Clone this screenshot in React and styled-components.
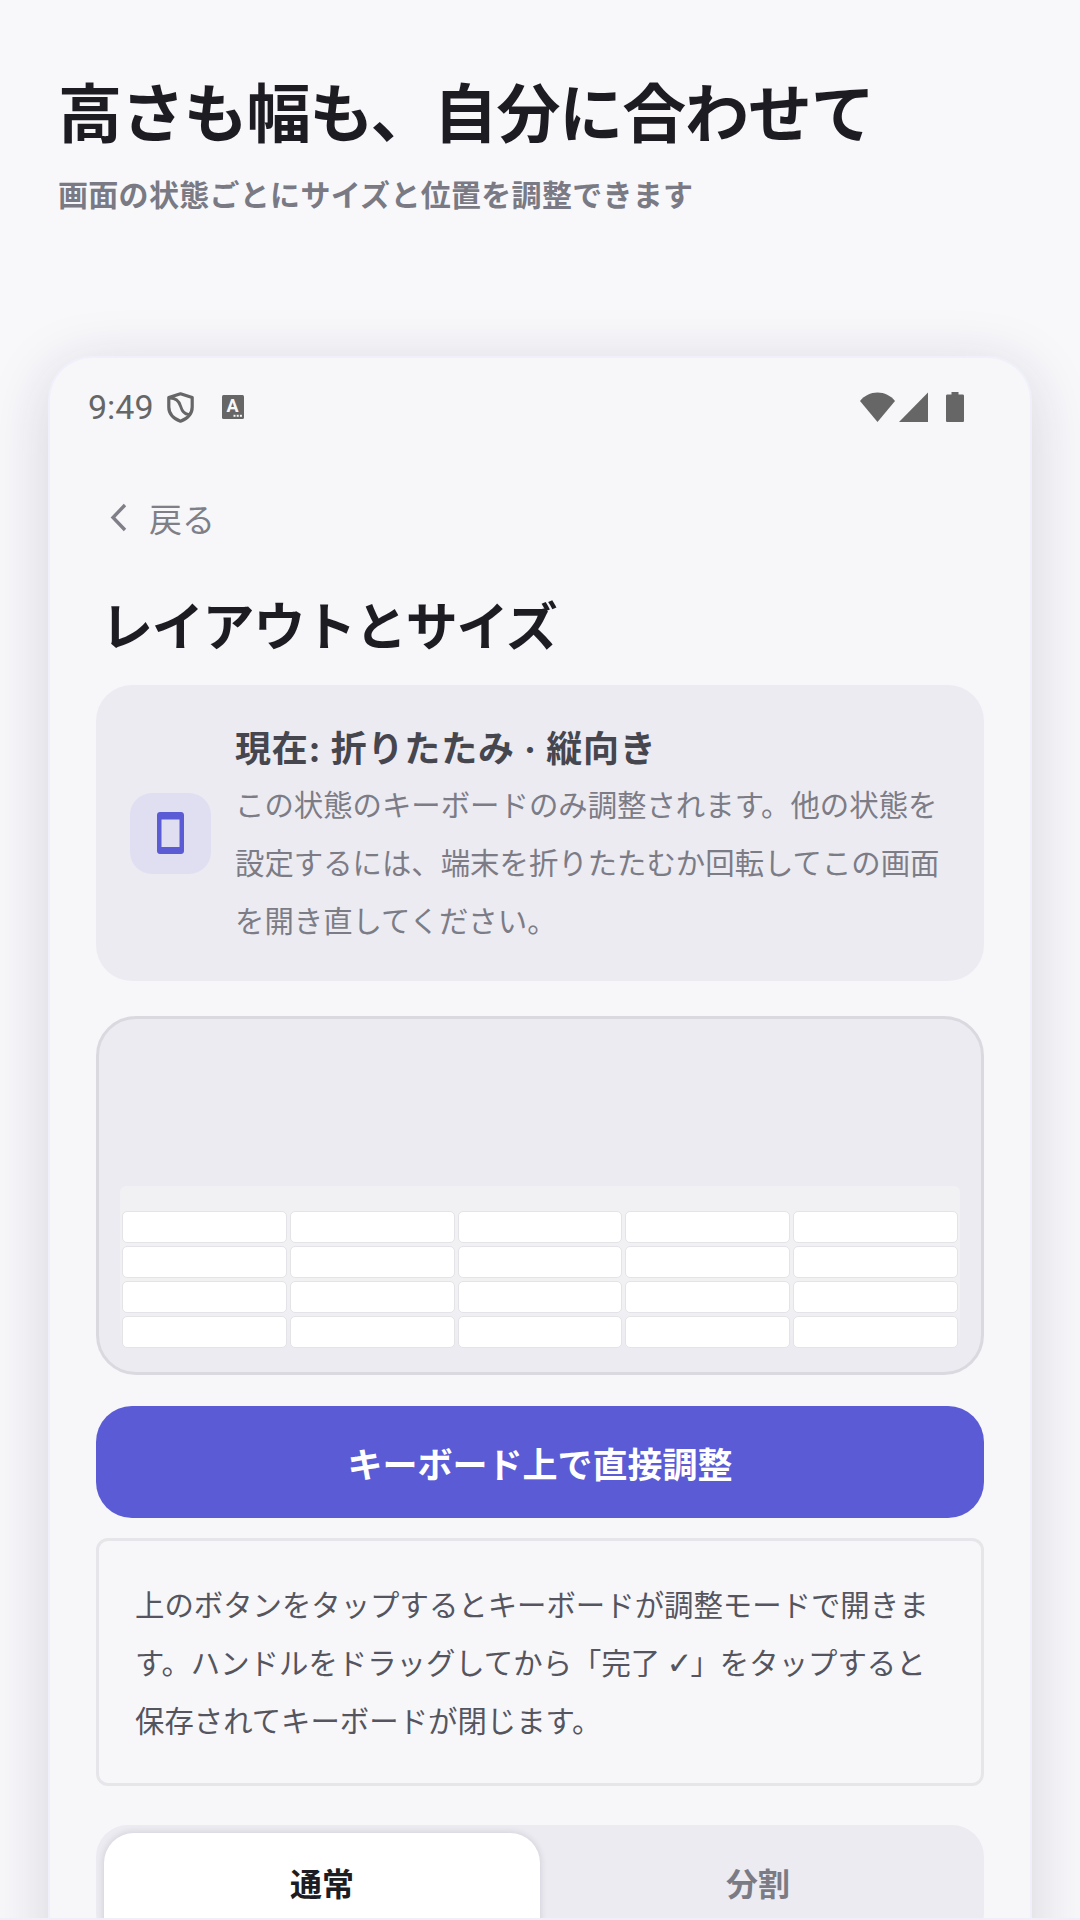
import React from 'react';
import styled, { createGlobalStyle } from 'styled-components';

const GlobalStyle = createGlobalStyle`
    html, body {
        margin: 0;
        padding: 0;
        background: #f8f8fb;
    }
    * {
        box-sizing: border-box;
    }
`;

const Page = styled.div`
    position: relative;
    width: 1080px;
    height: 1920px;
    overflow: hidden;
    background: #f8f8fb;
    font-family: Inter, "Noto Sans CJK JP", sans-serif;
    padding: 0 48px;
    &::after {
        content: '';
        position: absolute;
        left: 0;
        right: 0;
        bottom: 0;
        height: 2px;
        background: #efeffa;
    }
`;
const Header = styled.header`
    padding: 72px 10px 0;
    height: 356px;
`;
const Headline = styled.h1`
    margin: 0;
    font-size: 64px;
    line-height: 84px;
    font-weight: 700;
    color: #1c1c22;
    letter-spacing: -1.1px;
`;
const Subhead = styled.p`
    margin: 19px 0 0;
    font-size: 30px;
    line-height: 40px;
    font-weight: 700;
    color: #7a7a85;
    letter-spacing: 0.3px;
`;
const Phone = styled.section`
    width: 984px;
    height: 1700px;
    border-radius: 44px 44px 0 0;
    background: #f7f7fa;
    border: solid #f0f0fb;
    border-width: 2px 2px 0;
    box-shadow: 0 12px 60px rgba(30, 30, 60, 0.17);
    padding: 0 46px;
`;
const StatusBar = styled.div`
    height: 98px;
    margin: 0 -8px;
    display: flex;
    align-items: center;
    color: #666;
`;
const Time = styled.span`
    font-family: Roboto, sans-serif;
    font-size: 34px;
    margin-right: 13px;
`;
const StatusRight = styled.div`
    margin-left: auto;
    margin-right: 28px;
    display: flex;
    align-items: center;
    gap: 4px;
`;
const BackRow = styled.div`
    display: flex;
    align-items: center;
    gap: 21px;
    height: 48px;
    margin: 38px 0 0 10px;
    color: #7f7f88;
    font-size: 33px;
`;
const Title = styled.h2`
    margin: 50px 0 0 5px;
    font-size: 52px;
    line-height: 72px;
    font-weight: 700;
    color: #1c1c22;
    letter-spacing: -1.2px;
`;
const InfoCard = styled.div`
    margin-top: 21px;
    height: 296px;
    border-radius: 36px;
    background: #ecebf1;
    display: flex;
    align-items: center;
    padding: 0 34px;
    gap: 24px;
`;
const IconTile = styled.div`
    flex: none;
    width: 81px;
    height: 81px;
    border-radius: 22px;
    background: #e0dff2;
    display: flex;
    align-items: center;
    justify-content: center;
`;
const InfoText = styled.div`
    flex: 1;
    margin-top: 6px;
`;
const InfoTitle = styled.div`
    font-size: 36px;
    line-height: 56px;
    font-weight: 700;
    color: #46464f;
    letter-spacing: 0.8px;
`;
const InfoBody = styled.div`
    font-size: 29.4px;
    line-height: 58px;
    color: #7c7c86;
`;
const Preview = styled.div`
    margin-top: 35px;
    height: 359px;
    border-radius: 40px;
    border: 3px solid #d9d9df;
    background: #ecebf1;
    display: flex;
    flex-direction: column;
    justify-content: flex-end;
    padding: 0 21px 21px;
`;
const Keyboard = styled.div`
    height: 165px;
    background: linear-gradient(#f1f1f4, #f1f1f4 70%, #ecebf1);
    border-radius: 6px 6px 0 0;
    padding: 25px 2px 0;
    display: grid;
    grid-template-columns: repeat(5, 1fr);
    grid-auto-rows: 32px;
    gap: 3px;
`;
const Key = styled.div`
    background: #fff;
    border: 1.5px solid #e4e4e8;
    border-radius: 5px;
`;
const PrimaryButton = styled.button`
    display: block;
    width: 100%;
    margin-top: 31px;
    height: 112px;
    border: none;
    border-radius: 36px;
    background: #5a5bd5;
    color: #fff;
    font-family: inherit;
    font-size: 35px;
    font-weight: 700;
`;
const Note = styled.div`
    margin-top: 20px;
    height: 248px;
    border: 3px solid #e6e6ea;
    border-radius: 12px;
    padding: 36px 36px 0;
    font-size: 29.4px;
    line-height: 58px;
    color: #55555f;
`;
const CheckMark = styled.span`
    font-family: "DejaVu Sans", sans-serif;
    font-size: 31px;
    line-height: 0;
    margin: 0 -2px;
`;
const Tabs = styled.div`
    margin-top: 39px;
    height: 120px;
    border-radius: 32px;
    background: #ecebf1;
    padding: 8px 8px 0;
    display: flex;
`;
const Tab = styled.div`
    flex: 1;
    border-radius: 30px 30px 0 0;
    background: ${p => (p.$active ? '#fff' : 'transparent')};
    box-shadow: ${p => (p.$active ? '0 0 7px rgba(40, 40, 70, 0.16)' : 'none')};
    color: ${p => (p.$active ? '#1c1c22' : '#7b7b85')};
    font-size: 32px;
    font-weight: 700;
    text-align: center;
    padding-top: 30px;
    line-height: 44px;
`;

const ShieldIcon = () => (
    <svg width="27" height="31" viewBox="0 0 27 31" fill="none" stroke="#666" strokeWidth="3.2" strokeLinejoin="round">
        <path d="M13.5 1.8 L25.2 5.6 V15 C25.2 21.8 20.5 26.6 13.5 29.2 C6.5 26.6 1.8 21.8 1.8 15 V5.6 Z" />
        <path d="M3 6 C9 6 12 9 13.5 14 C15 19 18 23.5 23.5 22" strokeWidth="2.8" />
    </svg>
);

const KeyboardBadge = () => (
    <svg width="22" height="24" viewBox="0 0 22 24" style={{ marginLeft: 28 }}>
        <rect width="22" height="24" rx="1.5" fill="#666" />
        <text x="10.5" y="17" textAnchor="middle" fontFamily="Roboto, sans-serif" fontWeight="700" fontSize="18" fill="#f7f7fa">A</text>
        <rect x="11.5" y="19.8" width="2" height="2" fill="#f7f7fa" />
        <rect x="14.7" y="19.8" width="2" height="2" fill="#f7f7fa" />
        <rect x="17.9" y="19.8" width="2" height="2" fill="#f7f7fa" />
    </svg>
);

const WifiIcon = () => (
    <svg width="35" height="30" viewBox="0 0 35 30">
        <path d="M17.5 30 L0 9 C4.5 3.5 10.5 0.5 17.5 0.5 C24.5 0.5 30.5 3.5 35 9 Z" fill="#666" />
    </svg>
);

const SignalIcon = () => (
    <svg width="29" height="30" viewBox="0 0 29 30">
        <path d="M0 30 L29 0.5 V30 Z" fill="#666" />
    </svg>
);

const BatteryIcon = () => (
    <svg width="18" height="30" viewBox="0 0 18 30" style={{ marginLeft: 14 }}>
        <path d="M5.5 0 H12.5 V2.5 H16.5 C17.5 2.5 18 3 18 4 V28.5 C18 29.5 17.5 30 16.5 30 H1.5 C0.5 30 0 29.5 0 28.5 V4 C0 3 0.5 2.5 1.5 2.5 H5.5 Z" fill="#666" />
    </svg>
);

const BackChevron = () => (
    <svg width="22" height="32" viewBox="0 0 22 32" fill="none" stroke="#7f7f88" strokeWidth="3.4">
        <path d="M19 3 L7 15.5 L19 28" />
    </svg>
);

const TabletIcon = () => (
    <svg width="27" height="42" viewBox="0 0 27 42">
        <path fillRule="evenodd" fill="#5a5bd5" d="M3 0 H24 C25.7 0 27 1.3 27 3 V39 C27 40.7 25.7 42 24 42 H3 C1.3 42 0 40.7 0 39 V3 C0 1.3 1.3 0 3 0 Z M4.5 7.5 V35 H22.5 V7.5 Z" />
    </svg>
);

const App = () => {
    return (
        <Page>
            <GlobalStyle />
            <Header>
                <Headline>高さも幅も、自分に合わせて</Headline>
                <Subhead>画面の状態ごとにサイズと位置を調整できます</Subhead>
            </Header>
            <Phone>
                <StatusBar>
                    <Time>9:49</Time>
                    <ShieldIcon />
                    <KeyboardBadge />
                    <StatusRight>
                        <WifiIcon />
                        <SignalIcon />
                        <BatteryIcon />
                    </StatusRight>
                </StatusBar>
                <BackRow>
                    <BackChevron />
                    <span>戻る</span>
                </BackRow>
                <Title>レイアウトとサイズ</Title>
                <InfoCard>
                    <IconTile>
                        <TabletIcon />
                    </IconTile>
                    <InfoText>
                        <InfoTitle>現在: 折りたたみ · 縦向き</InfoTitle>
                        <InfoBody>この状態のキーボードのみ調整されます。他の状態を設定するには、端末を折りたたむか回転してこの画面を開き直してください。</InfoBody>
                    </InfoText>
                </InfoCard>
                <Preview>
                    <Keyboard>
                        {Array.from({ length: 20 }, (_, i) => <Key key={i} />)}
                    </Keyboard>
                </Preview>
                <PrimaryButton>キーボード上で直接調整</PrimaryButton>
                <Note>上のボタンをタップするとキーボードが調整モードで開きます。ハンドルをドラッグしてから「完了 <CheckMark>✓</CheckMark>」をタップすると保存されてキーボードが閉じます。</Note>
                <Tabs>
                    <Tab $active>通常</Tab>
                    <Tab>分割</Tab>
                </Tabs>
            </Phone>
        </Page>
    )
}

export default App
